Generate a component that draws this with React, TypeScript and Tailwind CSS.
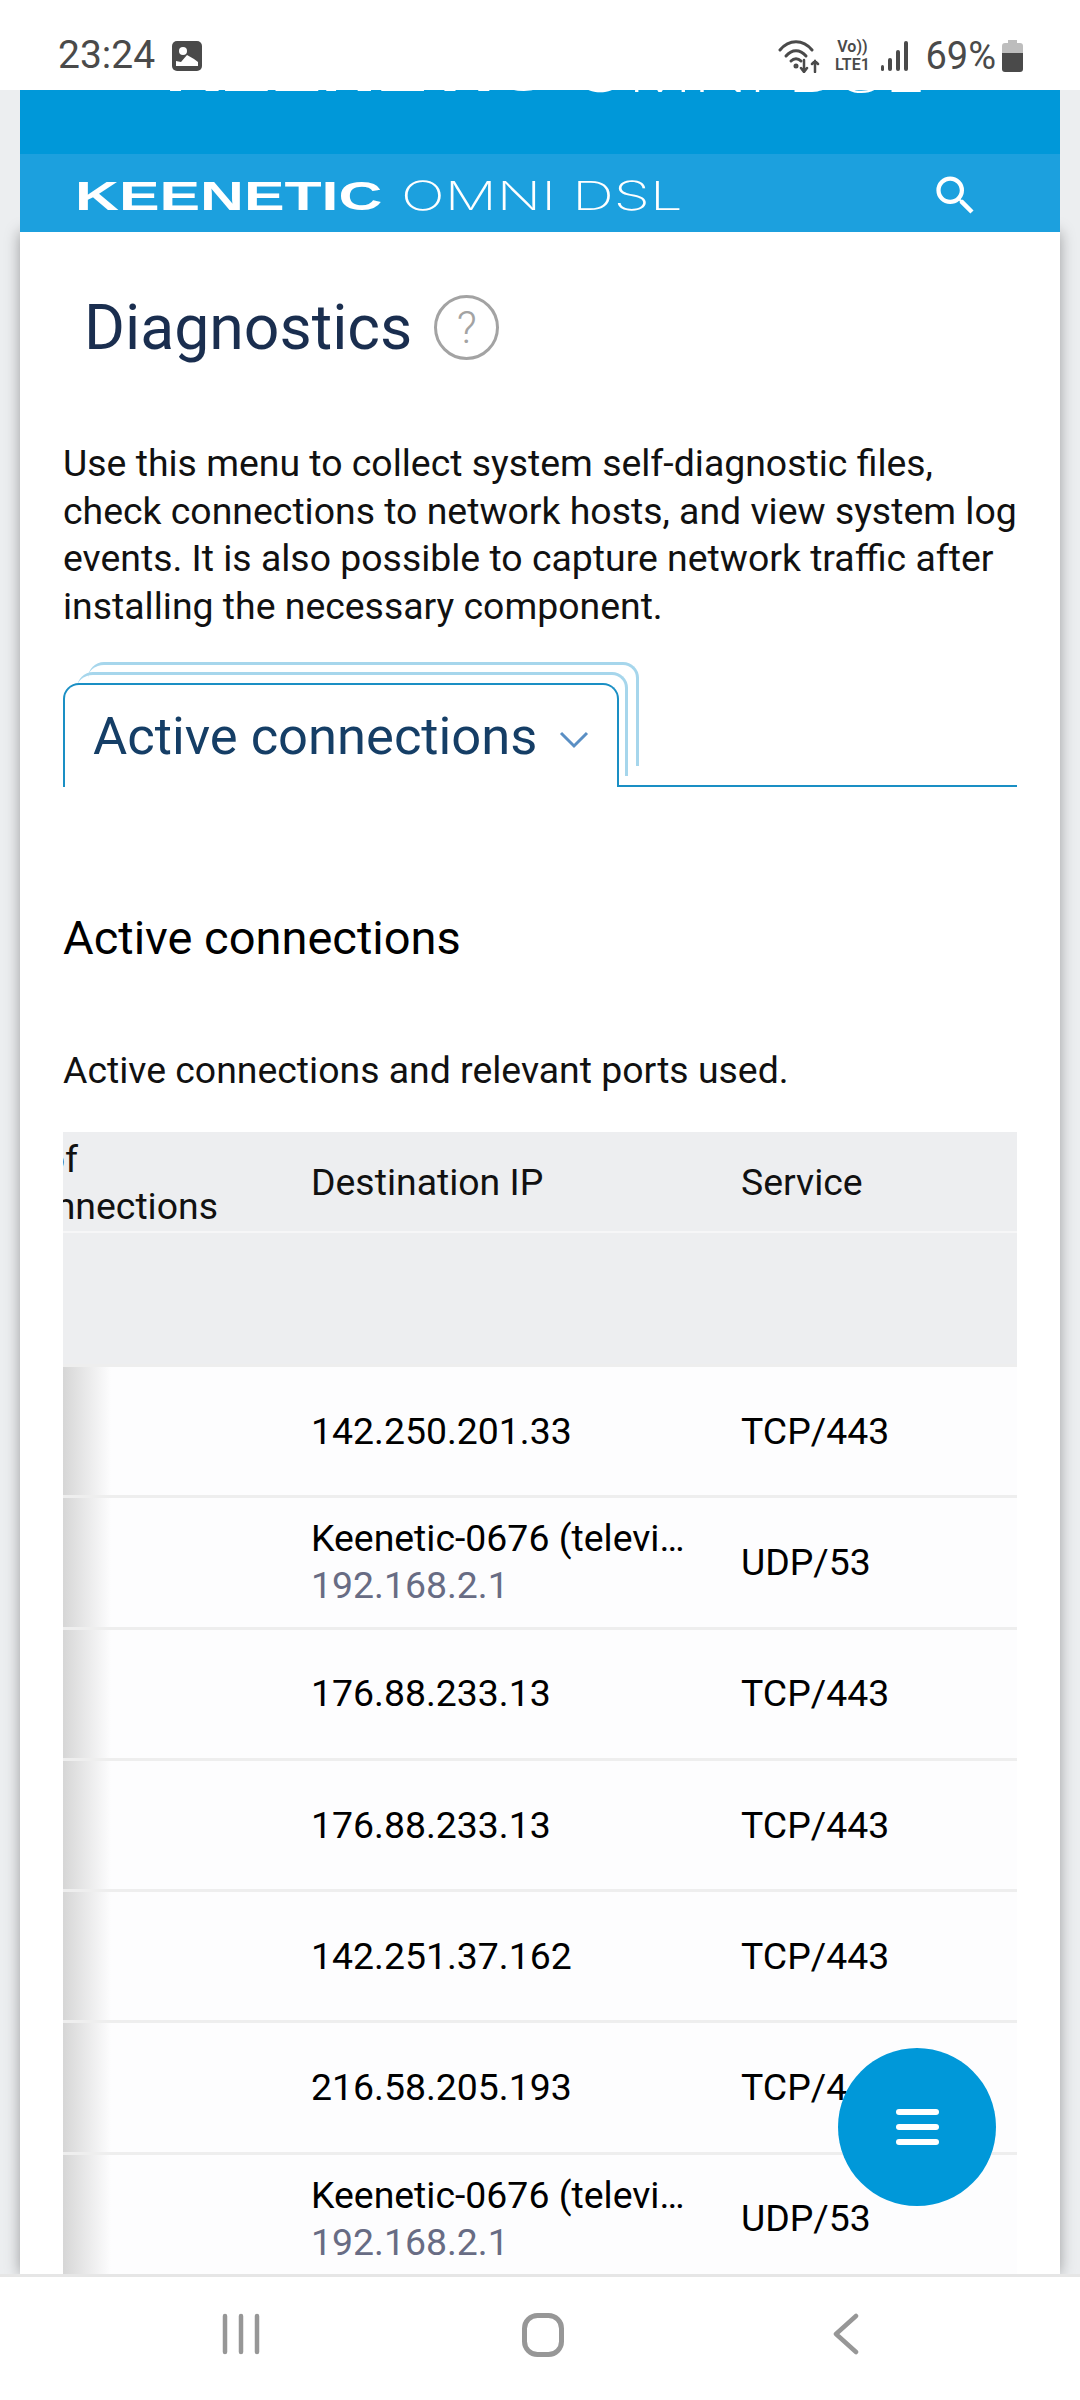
interface Row {
  ip: string;
  sub?: string;
  service: string;
}

const rows: Row[] = [
  { ip: "142.250.201.33", service: "TCP/443" },
  { ip: "Keenetic-0676 (television)", sub: "192.168.2.1", service: "UDP/53" },
  { ip: "176.88.233.13", service: "TCP/443" },
  { ip: "176.88.233.13", service: "TCP/443" },
  { ip: "142.251.37.162", service: "TCP/443" },
  { ip: "216.58.205.193", service: "TCP/443" },
  { ip: "Keenetic-0676 (television)", sub: "192.168.2.1", service: "UDP/53" },
];

function StatusBar() {
  return (
    <div className="relative z-20 flex h-[90px] shrink-0 items-center justify-between bg-white pl-[58px] pr-[57px] pt-[21px] text-[#4a4a4a]">
      <div className="flex items-center gap-[17px]">
        <span className="text-[39px] leading-none">23:24</span>
        <svg width="30" height="30" viewBox="0 0 30 30">
          <rect width="30" height="30" rx="5" fill="#4a4a4a" />
          <circle cx="11" cy="10" r="4" fill="#fff" />
          <path d="M4 25v-5l5 1 6-7 7 4 4 3v4z" fill="#fff" />
        </svg>
      </div>
      <div className="flex items-center">
        <svg width="44" height="34" viewBox="0 0 44 34" fill="none" stroke="#4a4a4a" strokeWidth="3" strokeLinecap="round">
          <path d="M2 11C11 0 25 0 34 11" />
          <path d="M8 17c6-7 14-7 20 0" />
          <path d="M13 22c3-3 7-3 10 0" />
          <path d="M26 21v12M23 29l3 4 3-4" strokeWidth="2.5" />
          <path d="M37 33V22M34 25l3-3 3 3" strokeWidth="2.5" />
          <circle cx="18" cy="27" r="1" fill="#4a4a4a" />
        </svg>
        <div className="ml-[11px] flex w-[38px] flex-col items-center text-[16px] font-semibold leading-[18px]">
          <span>Vo))</span>
          <span>LTE1</span>
        </div>
        <div className="ml-[10px] flex h-[30px] items-end gap-[4px]">
          <div className="h-[6px] w-[3px] rounded-full bg-[#4a4a4a]" />
          <div className="h-[13px] w-[4px] rounded-full bg-[#4a4a4a]" />
          <div className="h-[21px] w-[4px] rounded-full bg-[#4a4a4a]" />
          <div className="h-[30px] w-[4px] rounded-full bg-[#4a4a4a]" />
        </div>
        <span className="ml-[17px] text-[38px] leading-none">69%</span>
        <svg className="ml-[6px]" width="21" height="32" viewBox="0 0 21 32">
          <path d="M6 0h9v3h3a3 3 0 0 1 3 3v7H0V6a3 3 0 0 1 3-3h3z" fill="#bdbdbd" />
          <path d="M0 13h21v16a3 3 0 0 1-3 3H3a3 3 0 0 1-3-3z" fill="#4a4a4a" />
        </svg>
      </div>
    </div>
  );
}

function Header() {
  return (
    <div className="relative z-10 shrink-0 text-white">
      <div className="h-[64px] overflow-hidden bg-[#0098d9]">
        <div className="mt-[-41px] flex h-[50px] items-center whitespace-nowrap pl-[145px] font-['Liberation_Sans',sans-serif] text-[50px] leading-none">
          <span className="w-[408px] origin-left scale-x-[1.52] font-bold">KEENETIC</span>
          <span className="origin-left scale-x-[1.45] font-['Inter',sans-serif] font-extralight">OMNI DSL</span>
        </div>
      </div>
      <div className="flex h-[78px] items-center justify-between bg-[#1ca0de] pl-[55px] pr-[79px] pt-[5px]">
        <div className="flex items-center whitespace-nowrap font-['Liberation_Sans',sans-serif] text-[40px] leading-none">
          <span className="w-[326px] origin-left scale-x-[1.52] font-bold">KEENETIC</span>
          <span className="origin-left scale-x-[1.45] font-['Inter',sans-serif] font-extralight">OMNI DSL</span>
        </div>
        <svg width="51" height="51" viewBox="0 0 24 24" fill="#fff">
          <path d="M15.5 14h-.79l-.28-.27A6.471 6.471 0 0 0 16 9.5 6.5 6.5 0 1 0 9.5 16c1.61 0 3.09-.59 4.23-1.57l.27.28v.79l5 4.99L20.49 19l-4.99-5zm-6 0C7.01 14 5 11.99 5 9.5S7.01 5 9.5 5 14 7.01 14 9.5 11.99 14 9.5 14z" />
        </svg>
      </div>
    </div>
  );
}

function Tabs() {
  return (
    <div className="relative mt-[53px] flex h-[104px]">
      <div className="absolute left-[25px] top-[-21px] h-[104px] w-[551px] rounded-t-[16px] border-r-[3px] border-t-[3px] border-[#a6d6ec]" />
      <div className="absolute left-[14px] top-[-11px] h-[104px] w-[551px] rounded-t-[16px] border-r-[3px] border-t-[3px] border-[#a6d6ec]" />
      <div className="relative flex w-[556px] items-center rounded-t-[16px] border-x-2 border-t-2 border-[#1a8fc4] bg-white pl-[28px]">
        <span className="text-[52.5px] leading-none text-[#153e66]">Active connections</span>
        <svg className="ml-[22px] mt-[8px]" width="30" height="18" viewBox="0 0 30 18" fill="none" stroke="#5a8fc4" strokeWidth="3">
          <path d="M2 2l13 13L28 2" />
        </svg>
      </div>
      <div className="flex-1 border-b-2 border-[#1a8fc4]" />
    </div>
  );
}

function DataRow({ row }: { row: Row }) {
  return (
    <div className="flex h-[131.3px] border-t-[3px] border-[#eeeeee] bg-[#fdfdfe] text-black first:border-t-0">
      <div className="w-[248px] shrink-0">
        <div className="h-full w-[48px] bg-gradient-to-r from-[#d6d6d6] to-transparent" />
      </div>
      <div className="flex w-[430px] shrink-0 flex-col justify-center">
        <span className="w-[376px] truncate">{row.ip}</span>
        {row.sub && <span className="text-[#686c84]">{row.sub}</span>}
      </div>
      <div className="flex items-center">{row.service}</div>
    </div>
  );
}

function ConnectionsTable() {
  return (
    <div className="mt-[38px] overflow-hidden text-[37.4px] leading-[47px]">
      <div className="flex h-[101px] items-center border-b-2 border-[#f6f6f7] bg-[#edeef0] pt-[2px] text-[#111]">
        <div className="w-[248px] shrink-0 overflow-hidden">
          <div className="ml-[-245px] w-[400px] whitespace-nowrap text-right">
            <div className="pr-[140px]">Number of</div>
            <div>connections</div>
          </div>
        </div>
        <div className="w-[430px] shrink-0">Destination IP</div>
        <div>Service</div>
      </div>
      <div className="h-[131px] bg-[#edeef0]" />
      {rows.map((row, i) => (
        <DataRow key={i} row={row} />
      ))}
    </div>
  );
}

function NavBar() {
  return (
    <div className="relative z-20 flex h-[126px] shrink-0 items-start border-t-[3px] border-[#e6e6e6] bg-white pl-[222px] pt-[36px]">
      <svg width="38" height="42" viewBox="0 0 38 42" stroke="#979797" strokeWidth="4.5" strokeLinecap="round">
        <path d="M3 3v36M19 3v36M35 3v36" />
      </svg>
      <svg className="ml-[262px]" width="42" height="44" viewBox="0 0 42 44" fill="none" stroke="#979797" strokeWidth="5">
        <rect x="2.5" y="2.5" width="37" height="39" rx="13" />
      </svg>
      <svg className="ml-[269px]" width="26" height="42" viewBox="0 0 26 42" fill="none" stroke="#979797" strokeWidth="4.5" strokeLinecap="round" strokeLinejoin="round">
        <path d="M23 3L3 21l20 18" />
      </svg>
    </div>
  );
}

export default function App() {
  return (
    <div className="relative flex h-[2400px] w-[1080px] flex-col overflow-hidden bg-[#eceef0] font-['Roboto',sans-serif]">
      <StatusBar />
      <div className="flex min-h-0 flex-1 flex-col px-[20px]">
        <Header />
        <div className="min-h-0 flex-1 overflow-hidden bg-white px-[43px] shadow-[0_0_14px_rgba(0,0,0,0.35)]">
          <div className="flex items-center pl-[21px] pt-[63px]">
            <h1 className="text-[62.5px] font-normal leading-[65px] text-[#1a2e4f]">Diagnostics</h1>
            <div className="ml-[22px] flex h-[65px] w-[65px] items-center justify-center rounded-full border-[3px] border-[#a3a3a3] text-[44px] font-light leading-none text-[#a3a3a3]">?</div>
          </div>
          <p className="mt-[80px] text-[37.4px] leading-[47.5px] text-[#111]">
            Use this menu to collect system self-diagnostic files, check connections to network hosts, and view system log events. It is also possible to capture network traffic after installing the necessary component.
          </p>
          <Tabs />
          <h2 className="mt-[126px] text-[47px] font-normal leading-[50px] text-black">Active connections</h2>
          <p className="mt-[84px] text-[37.4px] leading-[47px] text-[#111]">Active connections and relevant ports used.</p>
          <ConnectionsTable />
        </div>
      </div>
      <NavBar />
      <button className="absolute left-[838px] top-[2048px] z-30 flex h-[158px] w-[158px] flex-col items-center justify-center gap-[9px] rounded-full bg-[#0098d9]">
        <span className="h-[6px] w-[43px] rounded-full bg-white" />
        <span className="h-[6px] w-[43px] rounded-full bg-white" />
        <span className="h-[6px] w-[43px] rounded-full bg-white" />
      </button>
    </div>
  );
}
